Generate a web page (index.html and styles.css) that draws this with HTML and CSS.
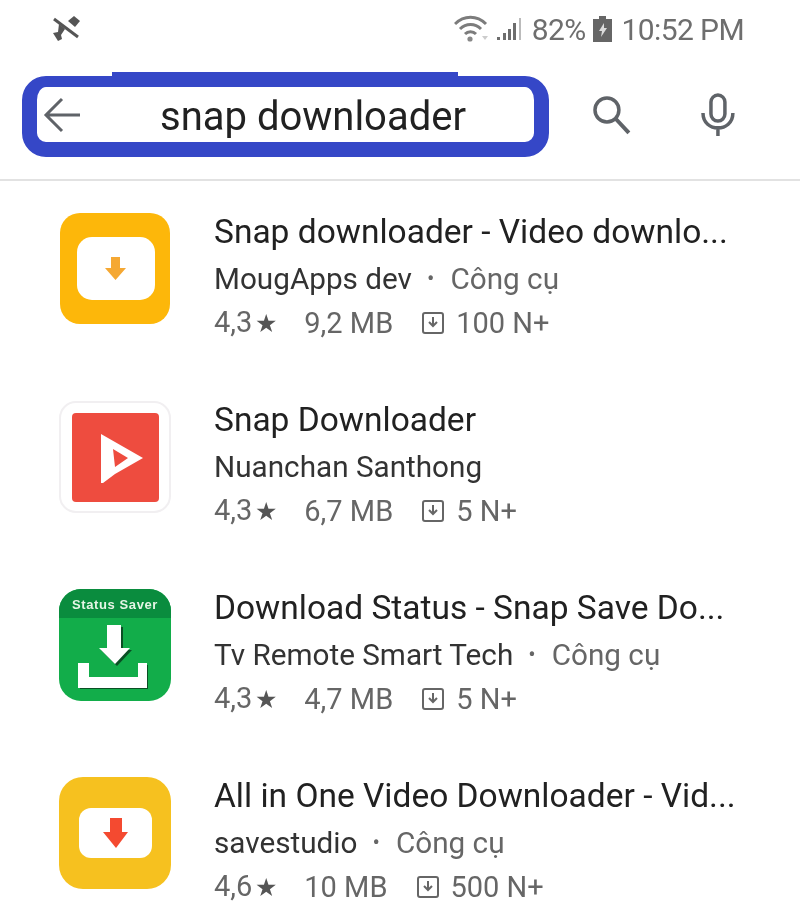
FILE: index.html
```html
<!DOCTYPE html>
<html lang="en">
  <head>
    <meta charset="UTF-8" />
    <meta name="viewport" content="width=device-width, initial-scale=1.0" />
    <title>snap downloader</title>
    <link rel="stylesheet" href="styles.css">
  </head>
  <body>
    <div class="status-bar">
      <svg width="30" height="26" viewBox="0 0 30 26">
        <path d="M23 0l6 5-5 6-7-6z" fill="#555" />
        <path d="M8 8l6 5-4 6 1 4-4 2-5-8 5-1z" fill="#555" />
        <path d="M3 3l24 18" stroke="#555" stroke-width="3" />
      </svg>
      <div class="status-right">
        <svg width="36" height="28" viewBox="0 0 36 28">
          <path d="M1 9c9-9 22-9 31 0M6 14c6-6 15-6 21 0M11 19c3-3 8-3 11 0" fill="none" stroke="#7c7c7c" stroke-width="3" />
          <circle cx="16" cy="24" r="2.600" fill="#888" />
          <path d="M28 21h6l-3 4z" fill="#ccc" />
        </svg>
        <svg class="signal" width="26" height="26" viewBox="0 0 26 26">
          <path d="M1 21h3v3H1zM7 17h3v7H7zM12 13h3v11h-3zM17 7h3v17h-3z" fill="#6d6d6d" />
          <path d="M23 2h2v22h-2z" fill="#bbb" />
        </svg>
        <span class="status-text percent">82%</span>
        <svg class="battery" width="19" height="26" viewBox="0 0 19 26">
          <path d="M6 0h7v3h6v23H0V3h6z" fill="#666" />
          <path d="M11 7l-5 8h3l-1 6 6-9h-3z" fill="#ddd" />
        </svg>
        <span class="status-text clock">10:52 PM</span>
      </div>
    </div>

    <div class="search-row">
      <div class="search-box">
        <svg width="38" height="36" viewBox="0 0 38 36">
          <path d="M37 18H3M19 2L3 18l16 16" fill="none" stroke="#5f6368" stroke-width="3" />
        </svg>
        <span class="query">snap downloader</span>
      </div>
      <svg class="search-icon" width="42" height="42" viewBox="0 0 42 42">
        <circle cx="17" cy="16" r="12" fill="none" stroke="#5f6368" stroke-width="3.500" />
        <path d="M26 25l13 14" stroke="#5f6368" stroke-width="4" />
      </svg>
      <svg class="mic-icon" width="36" height="44" viewBox="0 0 36 44">
        <rect x="11" y="2" width="14" height="26" rx="7" fill="none" stroke="#5f6368" stroke-width="3.500" />
        <path d="M3 20c0 20 30 20 30 0M18 33v10" fill="none" stroke="#5f6368" stroke-width="3.500" />
      </svg>
    </div>

    <div class="results">
      <div class="app">
        <svg class="app-icon" viewBox="0 0 112 112">
          <rect x="1" width="110" height="111" rx="20" fill="#fdb70a" />
          <rect x="18" y="24" width="78" height="63" rx="15" fill="#fff" />
          <path d="M52 44h9v11h6L56.500 67 46 55h6z" fill="#f5a833" />
        </svg>
        <div class="app-info">
          <div class="app-name">Snap downloader - Video downlo...</div>
          <div class="app-dev">MougApps dev<span class="dot">•</span><span class="cat">Công cụ</span></div>
          <div class="app-meta">
            <span class="rating">4,3<span class="star">★</span></span>
            <span class="size">9,2 MB</span>
            <svg class="dl-icon" width="22" height="22" viewBox="0 0 22 22">
              <rect x="1" y="1" width="20" height="20" rx="2" fill="none" stroke="#666" stroke-width="2" />
              <path d="M11 5v9M7 10l4 4 4-4" fill="none" stroke="#666" stroke-width="2" />
            </svg>
            <span>100 N+</span>
          </div>
        </div>
      </div>

      <div class="app">
        <svg class="app-icon" viewBox="0 0 112 112">
          <rect x="1" y="1" width="110" height="110" rx="16" fill="#fff" stroke="#f1eff1" stroke-width="2" />
          <rect x="13" y="12" width="87" height="89" rx="4" fill="#ee4c3f" />
          <path fill-rule="evenodd" d="M42 33L84 57 56 73 44 82H42zM54 48L69 57 56 66z" fill="#fff" />
        </svg>
        <div class="app-info">
          <div class="app-name">Snap Downloader</div>
          <div class="app-dev">Nuanchan Santhong</div>
          <div class="app-meta">
            <span class="rating">4,3<span class="star">★</span></span>
            <span class="size">6,7 MB</span>
            <svg class="dl-icon" width="22" height="22" viewBox="0 0 22 22">
              <rect x="1" y="1" width="20" height="20" rx="2" fill="none" stroke="#666" stroke-width="2" />
              <path d="M11 5v9M7 10l4 4 4-4" fill="none" stroke="#666" stroke-width="2" />
            </svg>
            <span>5 N+</span>
          </div>
        </div>
      </div>

      <div class="app">
        <svg class="app-icon" viewBox="0 0 112 112">
          <rect width="112" height="112" rx="22" fill="#12ad4a" />
          <path d="M0 29V22A22 22 0 0 1 22 0h68a22 22 0 0 1 22 22v7z" fill="#0a8c3e" />
          <text x="56" y="20" class="icon-label" text-anchor="middle">Status Saver</text>
          <path d="M50 38h14v23h9L58 77 42 61h8zM21 76h9v14h50V76h9v24H21z" fill="#0a4f24" />
          <path d="M48 36h14v23h9L56 75 40 59h8z" fill="#fff" />
          <path d="M19 74h11v14h49V74h9v25H19z" fill="#fff" />
        </svg>
        <div class="app-info">
          <div class="app-name">Download Status - Snap Save Do...</div>
          <div class="app-dev">Tv Remote Smart Tech<span class="dot">•</span><span class="cat">Công cụ</span></div>
          <div class="app-meta">
            <span class="rating">4,3<span class="star">★</span></span>
            <span class="size">4,7 MB</span>
            <svg class="dl-icon" width="22" height="22" viewBox="0 0 22 22">
              <rect x="1" y="1" width="20" height="20" rx="2" fill="none" stroke="#666" stroke-width="2" />
              <path d="M11 5v9M7 10l4 4 4-4" fill="none" stroke="#666" stroke-width="2" />
            </svg>
            <span>5 N+</span>
          </div>
        </div>
      </div>

      <div class="app">
        <svg class="app-icon" viewBox="0 0 112 112">
          <rect width="112" height="112" rx="24" fill="#f6c11f" />
          <rect x="20" y="31" width="73" height="50" rx="12" fill="#fff" />
          <path d="M51 41h12v14h6L57 71 44 55h7z" fill="#f44a30" />
        </svg>
        <div class="app-info">
          <div class="app-name">All in One Video Downloader - Vid...</div>
          <div class="app-dev">savestudio<span class="dot">•</span><span class="cat">Công cụ</span></div>
          <div class="app-meta">
            <span class="rating">4,6<span class="star">★</span></span>
            <span class="size">10 MB</span>
            <svg class="dl-icon" width="22" height="22" viewBox="0 0 22 22">
              <rect x="1" y="1" width="20" height="20" rx="2" fill="none" stroke="#666" stroke-width="2" />
              <path d="M11 5v9M7 10l4 4 4-4" fill="none" stroke="#666" stroke-width="2" />
            </svg>
            <span>500 N+</span>
          </div>
        </div>
      </div>
    </div>
  </body>
</html>
```

FILE: styles.css
```css
html,
body {
  height: 922px;
}
body {
  font-family: Roboto, "Liberation Sans", sans-serif;
  margin: 0;
  padding: 0;
  background-color: #fff;
  color: #212121;
  filter: blur(0.5px);
}
.status-bar {
  display: flex;
  justify-content: space-between;
  align-items: center;
  height: 58px;
  padding: 0 56px 0 51px;
}
.status-right {
  display: flex;
  align-items: center;
}
.signal {
  margin-left: 6px;
}
.percent {
  margin-left: 10px;
}
.battery {
  margin-left: 7px;
}
.clock {
  margin-left: 10px;
}
.status-text {
  font-size: 30px;
  letter-spacing: -0.6px;
  color: #6e6e6e;
}
.search-row {
  display: flex;
  align-items: center;
  height: 121px;
  padding: 0 64px 0 22px;
  border-bottom: 2px solid #e2e2e2;
}
.search-box {
  position: relative;
  display: flex;
  align-items: center;
  gap: 79px;
  box-sizing: border-box;
  width: 529px;
  height: 81px;
  padding: 0 0 0 6px;
  margin-top: -4px;
  border-style: solid;
  border-color: #3547c7;
  border-width: 11px 15px 15px;
  border-radius: 24px;
}
.search-box::before {
  content: "";
  position: absolute;
  top: -15px;
  left: 75px;
  width: 346px;
  height: 4px;
  background-color: #3547c7;
}
.query {
  font-size: 40px;
  margin-top: 3px;
  color: #212121;
}
.search-icon {
  margin-left: 41px;
  margin-top: -8px;
}
.mic-icon {
  margin-left: 68px;
  margin-top: -8px;
}
.results {
  display: flex;
  flex-direction: column;
  gap: 76px;
  padding: 32px 0 0 59px;
}
.app {
  display: flex;
  gap: 43px;
  height: 112px;
}
.app-icon {
  width: 112px;
  height: 112px;
  flex-shrink: 0;
}
.icon-label {
  font-family: "Liberation Sans", sans-serif;
  font-size: 13px;
  font-weight: bold;
  letter-spacing: 0.6px;
  fill: #e6f5e6;
}
.app-info {
  display: flex;
  flex-direction: column;
  margin-top: -4px;
}
.app-name {
  font-size: 33.500px;
  line-height: 46px;
  white-space: nowrap;
}
.app-dev {
  font-size: 29.700px;
  line-height: 48px;
  color: #333;
}
.dot {
  color: #666;
  font-size: 22px;
  margin: 0 16px 0 15px;
  vertical-align: 3px;
}
.cat {
  color: #666;
}
.app-meta {
  display: flex;
  align-items: center;
  margin-top: -2px;
  font-size: 29px;
  line-height: 42px;
  color: #666;
}
.star {
  font-size: 25px;
  margin-left: 3px;
  color: #555;
}
.size {
  margin-left: 27px;
}
.dl-icon {
  margin: 0 12px 0 29px;
}
```
